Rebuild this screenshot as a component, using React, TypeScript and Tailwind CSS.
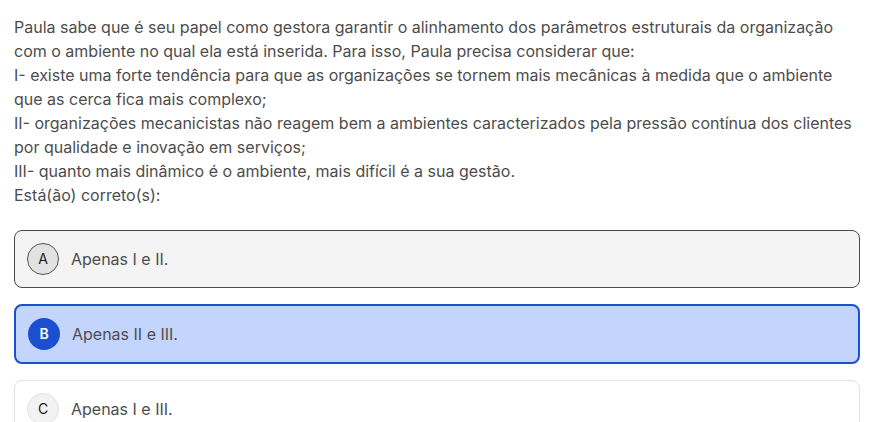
const options = [
  { letter: 'A', text: 'Apenas I e II.', state: 'hover' },
  { letter: 'B', text: 'Apenas II e III.', state: 'selected' },
  { letter: 'C', text: 'Apenas I e III.', state: 'idle' },
]

function Option({ letter, text, state }: { letter: string; text: string; state: string }) {
  const box =
    state === 'selected'
      ? 'border-2 border-[#1a4fd0] bg-[#c4d5fd] h-[60px]'
      : state === 'hover'
        ? 'border border-[#4a4a4a] bg-[#f4f4f4] h-[58px]'
        : 'border border-[#e2e2e2] bg-white h-[58px]'
  const dot =
    state === 'selected'
      ? 'bg-[#1a4fd0] text-white font-semibold'
      : state === 'hover'
        ? 'bg-[#e2e2e2] border border-[#555] text-[#1a1a1a]'
        : 'bg-[#f2f2f2] border border-[#e2e2e2] text-[#1a1a1a]'
  return (
    <div className={`flex items-center gap-3 rounded-lg px-3 ${box}`}>
      <span className={`flex items-center justify-center w-8 h-8 rounded-full text-sm ${dot}`}>
        {letter}
      </span>
      <span className="text-base text-[#4d4d4d]">{text}</span>
    </div>
  )
}

export default function App() {
  return (
    <div
      className="w-[871px] h-[422px] overflow-hidden bg-white pl-[14px] pr-[11px] pt-[15px]"
      style={{ fontFamily: 'Inter, "Noto Sans", sans-serif' }}
    >
      <p className="text-base leading-6 text-[#4d4d4d]">
        Paula sabe que é seu papel como gestora garantir o alinhamento dos parâmetros estruturais da organização
        com o ambiente no qual ela está inserida. Para isso, Paula precisa considerar que:
        <br />
        I- existe uma forte tendência para que as organizações se tornem mais mecânicas à medida que o ambiente
        que as cerca fica mais complexo;
        <br />
        II- organizações mecanicistas não reagem bem a ambientes caracterizados pela pressão contínua dos clientes
        por qualidade e inovação em serviços;
        <br />
        III- quanto mais dinâmico é o ambiente, mais difícil é a sua gestão.
        <br />
        Está(ão) correto(s):
      </p>
      <div className="mt-[23px] flex flex-col gap-4">
        {options.map((o) => (
          <Option key={o.letter} {...o} />
        ))}
      </div>
    </div>
  )
}
